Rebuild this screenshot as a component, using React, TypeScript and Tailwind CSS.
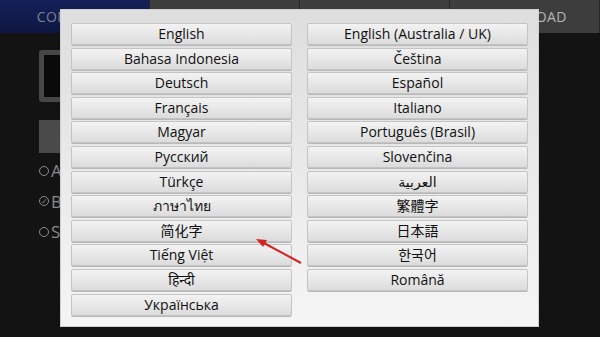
import React from 'react'

const languages: [string, string | null][] = [
  ['English', 'English (Australia / UK)'],
  ['Bahasa Indonesia', 'Čeština'],
  ['Deutsch', 'Español'],
  ['Français', 'Italiano'],
  ['Magyar', 'Português (Brasil)'],
  ['Русский', 'Slovenčina'],
  ['Türkçe', 'العربية'],
  ['ภาษาไทย', '繁體字'],
  ['简化字', '日本語'],
  ['Tiếng Việt', '한국어'],
  ['हिन्दी', 'Română'],
  ['Українська', null],
]

// non-latin scripts have no medium weight, keep them regular
const regular = ['العربية', 'ภาษาไทย', '繁體字', '简化字', '日本語', '한국어', 'हिन्दी']

function fontFor(label: string) {
  if (label === '繁體字') return 'font-["Open_Sans","Noto_Sans_CJK_TC",sans-serif]'
  if (label === '日本語') return 'font-["Open_Sans","Noto_Sans_CJK_JP",sans-serif]'
  if (label === '한국어') return 'font-["Open_Sans","Noto_Sans_CJK_KR",sans-serif]'
  return 'font-["Open_Sans","Noto_Sans","DejaVu_Sans","Noto_Sans_CJK_SC",sans-serif]'
}

function LangButton({ label }: { label: string }) {
  return (
    <button
      className={`h-[22px] w-full rounded-[2px] border border-[#c4c4c4] bg-gradient-to-b from-[#f3f3f3] to-[#dcdcdc] text-[14px] leading-none text-[#111] shadow-[0_1px_0_#b8b8b8] ${fontFor(label)} ${
        regular.includes(label) ? 'font-normal' : 'font-medium'
      }`}
    >
      {label}
    </button>
  )
}

function Tab({ label, active }: { label?: string; active?: boolean }) {
  return (
    <div
      className={`flex h-full w-[150px] items-center justify-center border-r border-[#262626] text-[14px] tracking-wide ${
        active ? 'bg-gradient-to-b from-[#15205a] to-[#0e1640] text-[#7c8094]' : 'bg-[#3d3d3d] text-[#b5b5b5]'
      }`}
    >
      {label}
    </div>
  )
}

function Radio({ letter, checked }: { letter: string; checked?: boolean }) {
  return (
    <div className="flex items-center gap-[2px] text-[17px] text-[#8a8a8a]">
      <span className="flex h-[10px] w-[10px] items-center justify-center rounded-full border border-[#8a8a8a] text-[8px] leading-none">
        {checked ? '✓' : ''}
      </span>
      <span>{letter}</span>
    </div>
  )
}

export default function App() {
  return (
    <div className='relative h-[337px] w-[600px] overflow-hidden bg-[#131313] font-["Open_Sans",sans-serif]'>
      <div className="flex h-[33px]">
        <Tab label="CONTROLS" active />
        <Tab />
        <Tab />
        <Tab label="DOWNLOAD" />
      </div>

      <div className="flex flex-col pl-[39px] pt-[17px]">
        <div className="h-[52px] w-[60px] rounded-[3px] border-[5px] border-[#474747] bg-[#0a0a0a]" />
        <div className="mt-[18px] h-[33px] w-[60px] bg-[#4a4a4a]" />
        <div className="mt-[5px] flex flex-col gap-[5px]">
          <Radio letter="A" />
          <Radio letter="B" checked />
          <Radio letter="S" />
        </div>
      </div>

      <div className="absolute left-[60px] top-[9px] h-[318px] w-[479px] border border-[#cfcfcf] bg-gradient-to-b from-[#dedede] to-[#f5f5f5] px-[10px] pt-[13px]">
        <div className="grid grid-cols-2 gap-x-[15px] gap-y-[2.6px]">
          {languages.map(([left, right]) => (
            <React.Fragment key={left}>
              <LangButton label={left} />
              {right ? <LangButton label={right} /> : <div />}
            </React.Fragment>
          ))}
        </div>
      </div>

      <svg className="absolute left-0 top-0" width="600" height="337">
        <line x1="301" y1="263" x2="262" y2="242" stroke="#d42222" strokeWidth="2" />
        <polygon points="256,239 267,240 263,247" fill="#d42222" />
      </svg>
    </div>
  )
}
